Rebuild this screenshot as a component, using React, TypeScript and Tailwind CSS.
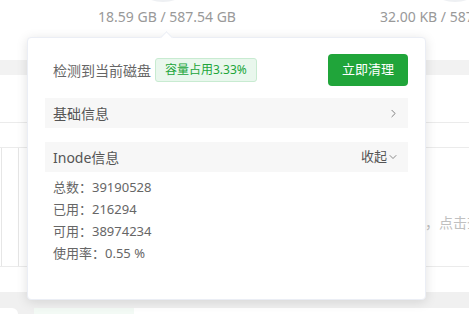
import { ChevronRight, ChevronDown } from "lucide-react";

const font = { fontFamily: '"Segoe UI", "Noto Sans", "Noto Sans CJK SC", sans-serif' };

export default function App() {
  return (
    <div className="relative w-[469px] h-[314px] overflow-hidden bg-white text-[13px]" style={font}>
      {/* Page behind the popover */}
      <div className="flex h-[60px]">
        <div className="w-[334px] shrink-0 flex flex-col items-center">
          <div className="w-[70px] h-[70px] rounded-full border-[5px] border-[#eef0f3] mt-[-68px] ml-[-8px]" />
          <div className="mt-[4px] text-[#999] text-[14px] whitespace-nowrap">18.59 GB / 587.54 GB</div>
        </div>
        <div className="flex-1 min-w-0 overflow-hidden flex flex-col items-start pl-[46px]">
          <div className="w-[70px] h-[70px] rounded-full border-[5px] border-[#eef0f3] mt-[-68px] ml-[40px] shrink-0" />
          <div className="mt-[4px] text-[#999] text-[14px] whitespace-nowrap">32.00 KB / 587.54 GB</div>
        </div>
      </div>
      <div className="h-[15px] bg-[#f2f2f2]" />
      <div className="h-[48px] border-b border-[#ebebeb]" />
      <div className="h-[25px] border-b border-[#ebebeb]" />
      <div className="h-[119px] flex gap-[16px] border-b border-[#ebebeb]">
        <div className="w-[2px] border-r border-[#e6e6e6]" />
        <div className="flex-1 min-w-0 border-l border-[#e6e6e6] pl-[406px] pt-[64px] text-[#c0c0c0] text-[14px] whitespace-nowrap overflow-hidden">
          ，点击查看详情
        </div>
      </div>
      <div className="h-[25px]" />
      <div className="h-[30px] bg-[#f0f0f0] pt-[16px] flex gap-[16px]">
        <div className="w-[18px] rounded-tr-[6px] bg-white" />
        <div className="flex-1 rounded-tl-[6px] bg-white flex">
          <div className="w-[100px] bg-[#f3faf5]" />
        </div>
      </div>

      {/* Popover */}
      <div className="absolute left-[27px] top-[37px] w-[399px] h-[263px] bg-white rounded-[4px] shadow-[0_2px_12px_rgba(0,0,0,0.12)] border border-[#ebeef5]">
        <div className="absolute left-[134px] top-[-5px] w-[9px] h-[9px] bg-white rotate-45 border-l border-t border-[#ebeef5]" />
        <div className="px-[17px] pt-[16px]">
          <div className="flex items-center h-[32px]">
            <span className="text-[#666] text-[14px] pl-[8px]">检测到当前磁盘</span>
            <span className="ml-[4px] h-[24px] px-[9px] flex items-center text-[12px] text-[#20a53a] bg-[#e9f7ed] border border-[#c8ebd1] rounded-[3px]">容量占用3.33%</span>
            <button className="ml-auto w-[80px] h-[32px] rounded-[4px] bg-[#20a53a] text-white text-[13px]">立即清理</button>
          </div>
          <div className="mt-[12px] h-[30px] bg-[#f7f7f7] flex items-center justify-between pl-[8px] pr-[8px] text-[#555] text-[14px]">
            <span>基础信息</span>
            <ChevronRight className="w-[13px] h-[13px] text-[#666]" strokeWidth={1.5} />
          </div>
          <div className="mt-[14px] h-[30px] bg-[#f7f7f7] flex items-center justify-between pl-[8px] pr-[9px] text-[#555]">
            <span className="text-[14px]">Inode信息</span>
            <span className="flex items-center">收起<ChevronDown className="w-[12px] h-[12px] text-[#666]" strokeWidth={1.5} /></span>
          </div>
          <div className="pl-[8px] pt-[4px] text-[#666] leading-[22px]">
            <div>总数：39190528</div>
            <div>已用：216294</div>
            <div>可用：38974234</div>
            <div>使用率：0.55 %</div>
          </div>
        </div>
      </div>
    </div>
  );
}
